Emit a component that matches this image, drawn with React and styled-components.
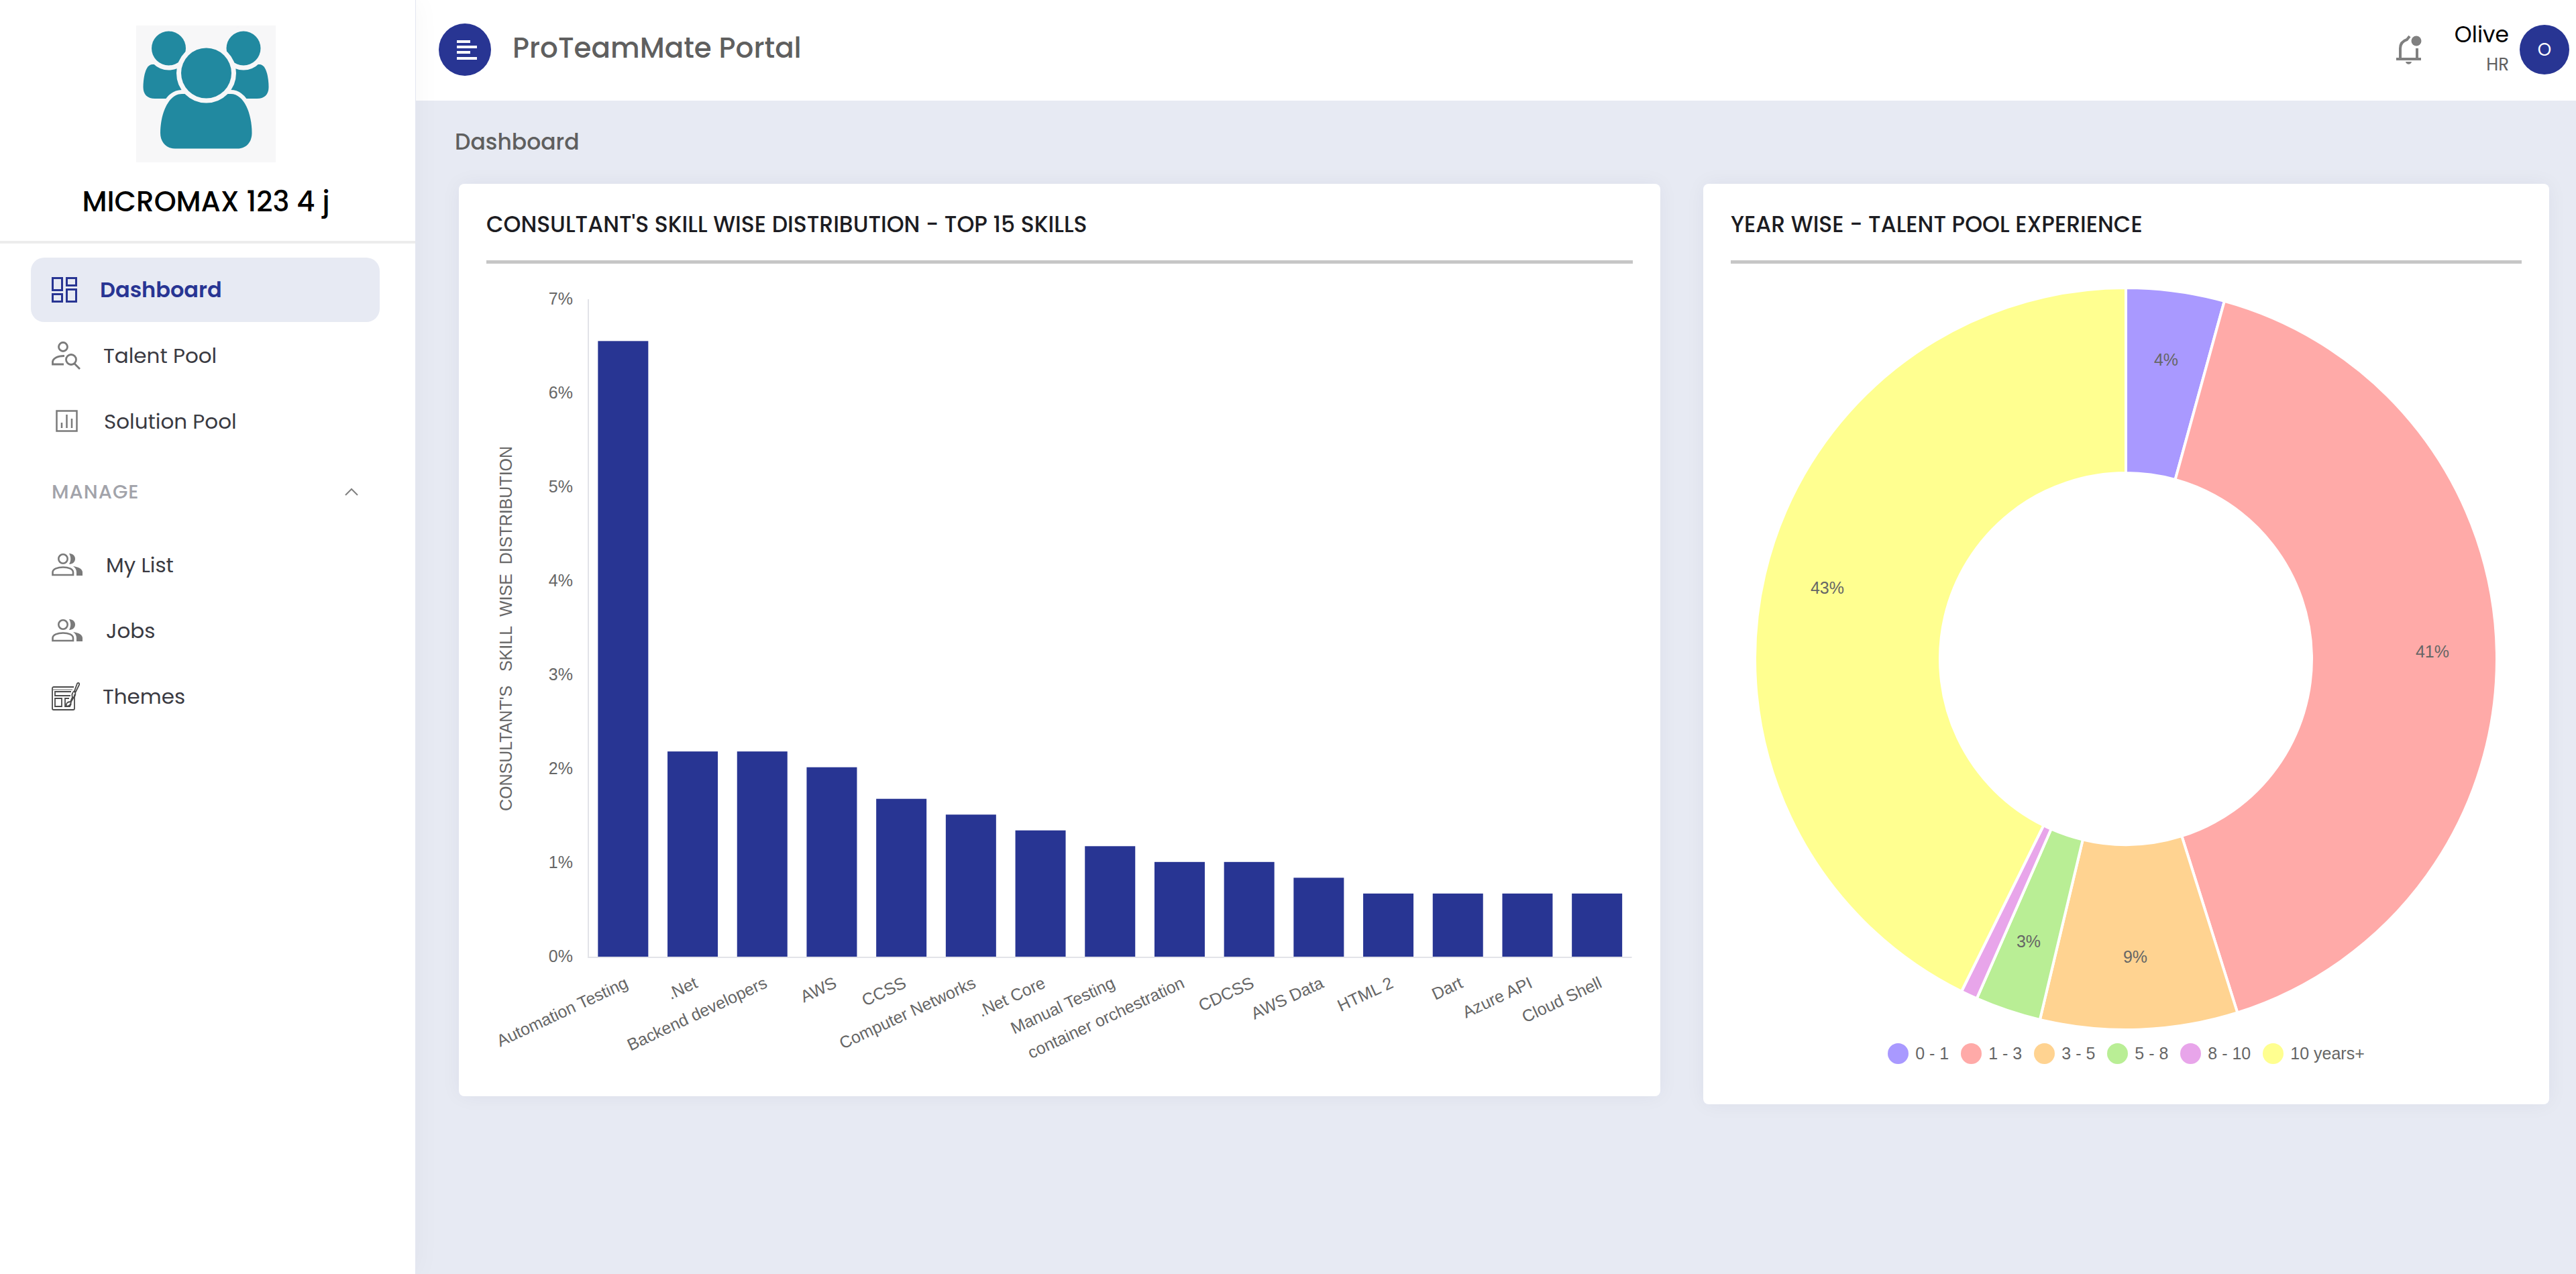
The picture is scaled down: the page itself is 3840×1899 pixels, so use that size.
import React from 'react';
import styled, { createGlobalStyle } from 'styled-components';

const GlobalStyle = createGlobalStyle`
  * {
    box-sizing: border-box;
  }

  body {
    margin: 0;
    background: #e7eaf3;
    font-family: Poppins, Inter, sans-serif;
  }
`;

const Page = styled.div`
  display: flex;
  min-height: 100vh;
`;

const Sidebar = styled.aside`
  flex: 0 0 620px;
  background: #fff;
  border-right: 1px solid #e3e6f0;
  box-shadow: 0 0 40px rgba(0, 0, 0, 0.04);
  z-index: 1;
`;

const Brand = styled.div`
  display: flex;
  flex-direction: column;
  align-items: center;
  padding: 38px 5px 28px 0;
  border-bottom: 4px solid #ececec;
`;

const BrandName = styled.h2`
  margin: 29px 0 0;
  font-size: 42px;
  font-weight: 500;
  line-height: 60px;
  color: #000;
`;

const Nav = styled.nav`
  display: flex;
  flex-direction: column;
  gap: 2px;
  padding: 21px 53px 0 46px;
`;

const NavItem = styled.a`
  display: flex;
  align-items: center;
  gap: 34px;
  height: 96px;
  padding-left: 31px;
  border-radius: 20px;
  background: ${props => (props.$active ? '#e7eaf3' : 'transparent')};
  color: ${props => (props.$active ? '#283593' : '#3a3a42')};
  font-size: ${props => (props.$active ? '32px' : '31px')};
  font-weight: ${props => (props.$active ? 600 : 400)};
  text-decoration: none;

  svg {
    flex: none;
    color: ${props => (props.$active ? '#283593' : '#7a7a7a')};
  }
`;

const NavHeading = styled.button`
  display: flex;
  align-items: center;
  justify-content: space-between;
  height: 114px;
  padding: 0 32px 4px 31px;
  border: none;
  background: transparent;
  color: #a2a3aa;
  font-family: inherit;
  font-size: 29px;
  font-weight: 500;
  letter-spacing: 1px;
  cursor: pointer;
`;

const Content = styled.div`
  flex: 1;
  min-width: 0;
`;

const Header = styled.header`
  display: flex;
  align-items: center;
  height: 150px;
  padding: 0 10px 2px 34px;
  background: #fff;
`;

const MenuButton = styled.button`
  display: flex;
  align-items: center;
  justify-content: center;
  width: 78px;
  height: 78px;
  padding: 0 0 0 6px;
  border: none;
  border-radius: 50%;
  background: #283593;
  cursor: pointer;
`;

const PortalName = styled.h1`
  margin: 0 auto 0 32px;
  padding-bottom: 6px;
  font-size: 42px;
  font-weight: 500;
  color: #5f5f5f;
`;

const BellButton = styled.button`
  display: flex;
  padding: 0;
  border: none;
  background: transparent;
  cursor: pointer;
`;

const User = styled.div`
  margin: 0 16px 0 49px;
  text-align: right;
  line-height: 44px;
`;

const UserName = styled.div`
  font-size: 33px;
  color: #000;
`;

const UserRole = styled.div`
  font-size: 26px;
  color: #5f5f5f;
`;

const Avatar = styled.button`
  width: 74px;
  height: 74px;
  padding: 0;
  border: none;
  border-radius: 50%;
  background: #283593;
  color: #fff;
  font-family: inherit;
  font-size: 26px;
  cursor: pointer;
`;

const Main = styled.main`
  padding: 37px 8px 60px 32px;
`;

const Crumb = styled.h3`
  margin: 0 0 37px;
  padding-left: 26px;
  font-size: 33px;
  font-weight: 500;
  line-height: 50px;
  color: #5f5f5f;
`;

const Row = styled.div`
  display: grid;
  grid-template-columns: minmax(0, 7fr) minmax(0, 5fr);
  align-items: start;
`;

const Column = styled.div`
  padding: 0 32px;
`;

const Card = styled.section`
  padding: 41px;
  border-radius: 8px;
  background: #fff;
  box-shadow: 0 0 30px rgba(40, 40, 80, 0.05);
`;

const CardTitle = styled.h4`
  margin: 0;
  padding-bottom: 33px;
  border-bottom: 5px solid #c6c6c6;
  font-size: 33px;
  font-weight: 500;
  line-height: 40px;
  color: #1c1c22;
`;

const Chart = styled.svg`
  display: block;
  width: 100%;
  height: auto;

  text {
    font-family: 'Liberation Sans', Arial, sans-serif;
    font-size: 25px;
    fill: #666;
  }
`;

const Legend = styled.ul`
  display: flex;
  justify-content: center;
  gap: 18px;
  margin: 0;
  padding: 0 0 19px;
  list-style: none;
`;

const LegendItem = styled.li`
  display: flex;
  align-items: center;
  gap: 10px;
  font-family: 'Liberation Sans', Arial, sans-serif;
  font-size: 25px;
  line-height: 32px;
  color: #666;

  &::before {
    content: '';
    width: 31px;
    height: 31px;
    border-radius: 50%;
    background: ${props => props.$color};
  }
`;

const TOTAL_SKILLS = 595;

const skills = [
  { name: 'Automation Testing', count: 39 },
  { name: '.Net', count: 13 },
  { name: 'Backend developers', count: 13 },
  { name: 'AWS', count: 12 },
  { name: 'CCSS', count: 10 },
  { name: 'Computer Networks', count: 9 },
  { name: '.Net Core', count: 8 },
  { name: 'Manual Testing', count: 7 },
  { name: 'container orchestration', count: 6 },
  { name: 'CDCSS', count: 6 },
  { name: 'AWS Data', count: 5 },
  { name: 'HTML 2', count: 4 },
  { name: 'Dart', count: 4 },
  { name: 'Azure API', count: 4 },
  { name: 'Cloud Shell', count: 4 },
];

// angles in degrees, clockwise from the top
const experience = [
  { name: '0 - 1', color: '#a999ff', from: 0, to: 15.4, label: '4%', x: 649, y: 143 },
  { name: '1 - 3', color: '#ffaaa8', from: 15.4, to: 162.5, label: '41%', x: 1046, y: 578 },
  { name: '3 - 5', color: '#ffd391', from: 162.5, to: 193.4, label: '9%', x: 603, y: 1033 },
  { name: '5 - 8', color: '#b9ee95', from: 193.4, to: 203.7, label: '3%', x: 444, y: 1010 },
  { name: '8 - 10', color: '#e8a5ea', from: 203.7, to: 206.3 },
  { name: '10 years+', color: '#ffff90', from: 206.3, to: 360, label: '43%', x: 144, y: 483 },
];

const AXIS_X = 152;
const AXIS_BOTTOM = 1033;
const PERCENT = 140;
const STEP = 103.7;
const BAR = 75;

function SkillChart() {
  return (
    <Chart viewBox="0 0 1709 1200" role="img" aria-label="Skill wise distribution">
      <text transform="translate(38 544) rotate(-90)" textAnchor="middle">
        {"CONSULTANT'S\u00a0\u00a0\u00a0SKILL\u00a0\u00a0WISE\u00a0\u00a0DISTRIBUTION"}
      </text>
      {[0, 1, 2, 3, 4, 5, 6, 7].map(tick => (
        <text key={tick} x="129" y={AXIS_BOTTOM - tick * PERCENT + 8} textAnchor="end">
          {tick}%
        </text>
      ))}
      <path
        d={`M${AXIS_X} ${AXIS_BOTTOM - 7 * PERCENT}V${AXIS_BOTTOM + 1}H${AXIS_X + 15 * STEP}`}
        fill="none"
        stroke="#e2e3e8"
        strokeWidth="2"
      />
      {skills.map((skill, i) => {
        const center = AXIS_X + (i + 0.5) * STEP;
        const height = (skill.count / TOTAL_SKILLS) * 100 * PERCENT;
        return (
          <g key={skill.name}>
            <rect x={center - BAR / 2} y={AXIS_BOTTOM - height} width={BAR} height={height} fill="#283593" />
            <text transform={`translate(${center + 9} ${AXIS_BOTTOM + 45}) rotate(-25)`} textAnchor="end">
              {skill.name}
            </text>
          </g>
        );
      })}
    </Chart>
  );
}

const CENTER = 589;

function point(angle, radius) {
  const rad = (angle * Math.PI) / 180;
  return `${CENTER + radius * Math.sin(rad)} ${CENTER - radius * Math.cos(rad)}`;
}

function slicePath({ from, to }) {
  const large = to - from > 180 ? 1 : 0;
  return `M${point(from, 553)}A553 553 0 ${large} 1 ${point(to, 553)}L${point(to, 277)}A277 277 0 ${large} 0 ${point(from, 277)}Z`;
}

function ExperienceChart() {
  return (
    <Chart viewBox="0 0 1179 1161" role="img" aria-label="Talent pool experience">
      {experience.map(slice => (
        <path key={slice.name} d={slicePath(slice)} fill={slice.color} stroke="#fff" strokeWidth="4" />
      ))}
      {experience.filter(slice => slice.label).map(slice => (
        <text key={slice.name} x={slice.x} y={slice.y + 9} textAnchor="middle">
          {slice.label}
        </text>
      ))}
    </Chart>
  );
}

function Logo() {
  return (
    <svg width="208" height="204" viewBox="0 0 208 204" fill="#2189a0" stroke="#f7f7f8">
      <rect width="208" height="204" fill="#f7f7f8" stroke="none" />
      <path stroke="none" d="M24 58C14 58 10.500 78 10.500 92C10.500 103 17 109 28 109H70V58Z" />
      <path stroke="none" d="M184 58C194 58 197.500 78 197.500 92C197.500 103 191 109 180 109H138V58Z" />
      <g paintOrder="stroke">
        <circle cx="48.500" cy="34" r="25.500" strokeWidth="14" />
        <circle cx="160" cy="34" r="25.500" strokeWidth="14" />
        <path
          strokeWidth="12"
          d="M68 102C48 102 36 132 36 160C36 174 45 183.500 58 183.500H151C164 183.500 172.500 174 172.500 160C172.500 132 161 102 141 102Z"
        />
        <circle cx="104.500" cy="71" r="37.500" strokeWidth="14" />
      </g>
    </svg>
  );
}

function DashboardIcon() {
  return (
    <svg width="38" height="38" viewBox="0 0 38 38" fill="none" stroke="currentColor" strokeWidth="3">
      <path d="M1.500 1.500h14v18h-14zM22.500 1.500h14v11h-14zM1.500 25.500h14v11h-14zM22.500 18.500h14v18h-14z" />
    </svg>
  );
}

function PersonSearchIcon() {
  return (
    <svg width="43" height="42" viewBox="0 0 43 42" fill="none" stroke="currentColor" strokeWidth="2.800">
      <circle cx="17" cy="8" r="6.500" />
      <path d="M19 21.500C9 21.500 1.500 25 1.500 31V34H18" />
      <circle cx="29" cy="27" r="7.500" />
      <path d="M34 33l8 8" />
    </svg>
  );
}

function ReportIcon() {
  return (
    <svg width="44" height="34" viewBox="0 0 44 34" fill="none" stroke="currentColor" strokeWidth="2.500">
      <path d="M7.500 1.500h30v30h-30z" />
      <path d="M15 19v8M22.500 7v20M30 13v14" />
    </svg>
  );
}

function PeopleIcon() {
  return (
    <svg width="47" height="34" viewBox="0 0 47 34" fill="none" stroke="currentColor" strokeWidth="2.600">
      <circle cx="17" cy="8" r="6.700" />
      <path d="M1.500 32V28C1.500 23 9 20.500 17 20.500S32 23 32 28V32Z" />
      <path fill="currentColor" stroke="none" d="M26 0C32 0 35 4 35 8S32 16 26 16C29 11 29 5 26 0Z" />
      <path fill="currentColor" stroke="none" d="M32 19C40 20 46 23 46 28V33H37V28C37 24 35 21 32 19Z" />
    </svg>
  );
}

function ThemesIcon() {
  return (
    <svg width="42" height="42" viewBox="0 0 42 42" fill="none" stroke="#4a4a4a" strokeWidth="1.800">
      <path d="M33 7H3a2 2 0 0 0-2 2v30a2 2 0 0 0 2 2h29a2 2 0 0 0 2-2V18" />
      <path d="M2 11h29" stroke="#aaa" />
      <path d="M29 14H5v6h23M5 24h10v12H5zM26 24h-6v12h7l2-4" />
      <path d="M34 13l4-11c1-2 4-1 3 2l-5 10zM34 13c-4 2-4 7-3 9l-3 7c-5 0-7 3-6 7 4 0 7-3 7-7l4-7c3-2 3-6 1-9z" />
    </svg>
  );
}

function BellIcon() {
  return (
    <svg width="38" height="44" viewBox="0 0 38 44" fill="none" stroke="#808080" strokeWidth="4">
      <path d="M6 36V20C6 13 10 9 16 7L20 2M31 20v16M0 36h37" />
      <circle cx="30" cy="9" r="7.500" fill="#808080" stroke="none" />
      <path d="M14 40h9c-1 5-8 5-9 0z" fill="#808080" stroke="none" />
    </svg>
  );
}

export default function App() {
  return (
    <>
      <GlobalStyle />
      <Page>
        <Sidebar>
          <Brand>
            <Logo />
            <BrandName>MICROMAX 123 4 j</BrandName>
          </Brand>
          <Nav>
            <NavItem href="#dashboard" $active>
              <DashboardIcon />
              Dashboard
            </NavItem>
            <NavItem href="#talent-pool">
              <PersonSearchIcon />
              Talent Pool
            </NavItem>
            <NavItem href="#solution-pool">
              <ReportIcon />
              Solution Pool
            </NavItem>
            <NavHeading>
              MANAGE
              <svg width="20" height="14" viewBox="0 0 20 14" fill="none" stroke="#808080" strokeWidth="2">
                <path d="M1 12l9-9 9 9" />
              </svg>
            </NavHeading>
            <NavItem href="#my-list">
              <PeopleIcon />
              My List
            </NavItem>
            <NavItem href="#jobs">
              <PeopleIcon />
              Jobs
            </NavItem>
            <NavItem href="#themes">
              <ThemesIcon />
              Themes
            </NavItem>
          </Nav>
        </Sidebar>
        <Content>
          <Header>
            <MenuButton aria-label="Toggle menu">
              <svg width="30" height="31" viewBox="0 0 30 31" stroke="#fff" strokeWidth="4">
                <path d="M0 3h20M0 11h30M0 19h20M0 28h30" />
              </svg>
            </MenuButton>
            <PortalName>ProTeamMate Portal</PortalName>
            <BellButton aria-label="Notifications">
              <BellIcon />
            </BellButton>
            <User>
              <UserName>Olive</UserName>
              <UserRole>HR</UserRole>
            </User>
            <Avatar>O</Avatar>
          </Header>
          <Main>
            <Crumb>Dashboard</Crumb>
            <Row>
              <Column>
                <Card>
                  <CardTitle>CONSULTANT'S SKILL WISE DISTRIBUTION - TOP 15 SKILLS</CardTitle>
                  <SkillChart />
                </Card>
              </Column>
              <Column>
                <Card>
                  <CardTitle>YEAR WISE - TALENT POOL EXPERIENCE</CardTitle>
                  <ExperienceChart />
                  <Legend>
                    {experience.map(slice => (
                      <LegendItem key={slice.name} $color={slice.color}>
                        {slice.name}
                      </LegendItem>
                    ))}
                  </Legend>
                </Card>
              </Column>
            </Row>
          </Main>
        </Content>
      </Page>
    </>
  );
}
